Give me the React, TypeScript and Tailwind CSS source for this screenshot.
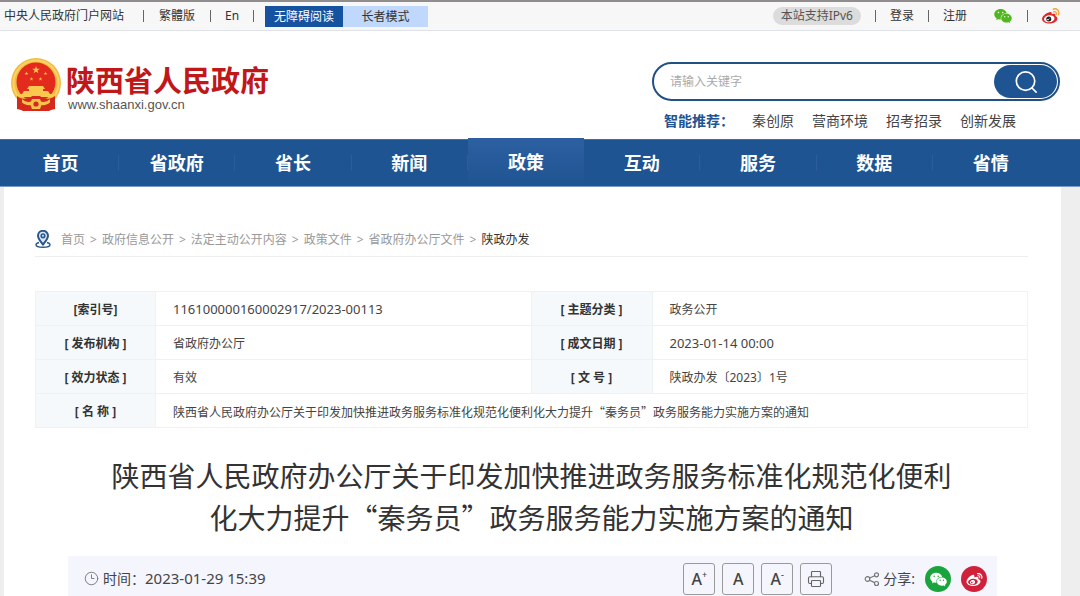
import { Fragment } from "react";
import { Clock3, Printer } from "lucide-react";
import { AiFillWechat, AiOutlineWeibo } from "react-icons/ai";

const navItems = [
  "首页",
  "省政府",
  "省长",
  "新闻",
  "政策",
  "互动",
  "服务",
  "数据",
  "省情",
];

const crumbs = [
  "首页",
  "政府信息公开",
  "法定主动公开内容",
  "政策文件",
  "省政府办公厅文件",
  "陕政办发",
];

const hotWords = ["秦创原", "营商环境", "招考招录", "创新发展"];

function Emblem() {
  const star = "M0-4 .95-1.25 3.8-1.2 1.5.5 2.35 3.2 0 1.6-2.35 3.2-1.5.5-3.8-1.2-.95-1.25Z";
  return (
    <svg viewBox="0 0 50 54" className="h-[54px] w-[50px] shrink-0" aria-hidden="true">
      <circle cx="25" cy="25" r="25" fill="#f3bb45" />
      <circle cx="25" cy="25" r="22.5" fill="none" stroke="#f9d465" strokeWidth="2" />
      <circle cx="25" cy="24" r="19.5" fill="#e42a1d" />
      <g fill="#f9c84e">
        <path d={star} transform="translate(25 12)" />
        <path d={star} transform="translate(15.5 15.5) scale(.5)" />
        <path d={star} transform="translate(34.5 15.5) scale(.5)" />
        <path d={star} transform="translate(20.5 21) scale(.5)" />
        <path d={star} transform="translate(29.5 21) scale(.5)" />
        <path d="M18 28h14l2 3h-2v2h5l2 3H11l2-3h5v-2h-2Z" />
        <path d="M6 36h38v3H6Z" />
      </g>
      <path d="M6 38c4 3 9 3.500 13 2l2-2h8l2 2c4 1.500 9 1 13-2v13l-4 1-2 1H12l-2-1-4-1Z" fill="#d6281d" />
      <path d="M11 41c3 3 7 3.500 9 2.500l1-2.500h8l1 2.500c2 1 6 .5 9-2.500v3.500c-3 2.500-6 3-8.500 2.500L29 51h-8l-1.500-4c-2.500.5-5.500 0-8.500-2.500Z" fill="#f7c24b" />
      <circle cx="25" cy="46" r="2.6" fill="#d6281d" />
    </svg>
  );
}

function WeiboColor() {
  return (
    <svg viewBox="0 0 36 32" className="h-4 w-[18px]" aria-hidden="true">
      <path
        d="M13 9c3-1.600 6-1.500 6.500 1 .2.900 0 1.600-.2 2.300 4-1.500 8-1.300 7.500 2.200-.1.700-.3 1.200 0 1.500 2.500.8 4 2.500 4 5 0 5.500-7 10-15.500 10S0 27 0 21.500C0 17 7 11 13 9Z"
        fill="#e0262b"
      />
      <ellipse cx="14.500" cy="21.500" rx="10.500" ry="7" fill="#fff" transform="rotate(-7 14.500 21.500)" />
      <circle cx="13.500" cy="22" r="5" fill="#161616" />
      <circle cx="12" cy="23" r="1.700" fill="#fff" />
      <circle cx="15.500" cy="20.500" r=".9" fill="#fff" />
      <path
        d="M22.500 2.500C29-.5 36 6 33 13.500M23.500 7.500c3.500-.8 6 1.500 5 5"
        fill="none"
        stroke="#f5a13a"
        strokeWidth="2.800"
        strokeLinecap="round"
      />
    </svg>
  );
}

function LocationPin() {
  return (
    <svg viewBox="0 0 16 18" className="h-[18px] w-4" fill="none" stroke="#2b568c" aria-hidden="true">
      <path d="M4 12.500c-2 .5-3 1.200-3 2.200 0 1.500 3 2.500 7 2.500s7-1 7-2.500c0-1-1-1.700-3-2.200" strokeWidth="1.400" />
      <path d="M8 14.500C5 11 3 8.600 3 5.800a5 5 0 0 1 10 0c0 2.800-2 5.200-5 8.700Z" strokeWidth="2" fill="#dbe8f8" />
      <circle cx="8" cy="5.800" r="1.800" strokeWidth="1.600" />
    </svg>
  );
}

function ShareNodes() {
  return (
    <svg viewBox="0 0 16 16" className="h-4 w-4" fill="none" stroke="#777" strokeWidth="1.200" aria-hidden="true">
      <circle cx="3.500" cy="8" r="2.300" />
      <circle cx="12.500" cy="3.800" r="2" />
      <circle cx="12.500" cy="12.500" r="2" />
      <path d="m5.700 7 5-2.300M5.500 9.200l5.200 2.400" />
    </svg>
  );
}

function Divider() {
  return <span className="h-3 w-px bg-[#666]" />;
}

function TopBar() {
  return (
    <div className="flex h-[31px] items-center justify-between border-t-2 border-b border-t-[#918d8f] border-b-[#dfe2e7] bg-[#f7f7f8] pr-5 pl-1 text-xs text-[#333]">
      <div className="flex items-center gap-[15px]">
        <a href="#" className="mr-1">中央人民政府门户网站</a>
        <Divider />
        <a href="#">繁體版</a>
        <Divider />
        <a href="#" className="-mx-px">En</a>
        <Divider />
        <div className="-ml-1 flex leading-[21px]">
          <button className="w-[78px] bg-[#1552a0] text-white">无障碍阅读</button>
          <button className="w-[85px] bg-[#bfd8fb]">长者模式</button>
        </div>
      </div>
      <div className="flex items-center gap-[14px]">
        <span className="rounded-full bg-[#dcdcdc] px-2 leading-[18px] text-[#555]">
          本站支持IPv6
        </span>
        <Divider />
        <a href="#">登录</a>
        <Divider />
        <a href="#">注册</a>
        <a href="#" aria-label="微信" className="ml-3">
          <AiFillWechat className="h-5 w-5 text-[#4fb81c]" />
        </a>
        <Divider />
        <a href="#" aria-label="微博">
          <WeiboColor />
        </a>
      </div>
    </div>
  );
}

function Header() {
  return (
    <header className="flex h-[108px] items-start justify-between bg-white pr-5 pl-[11px]">
      <a href="#" className="flex items-start gap-[5px] pt-[27px]">
        <Emblem />
        <span className="flex flex-col pt-[7px]">
          <span className="text-[29px] leading-8 font-bold text-[#c01719]">
            陕西省人民政府
          </span>
          <span className="pl-0.5 font-['Liberation_Sans',sans-serif] text-[13px] leading-4 text-[#555]">
            www.shaanxi.gov.cn
          </span>
        </span>
      </a>
      <div className="w-[408px] pt-[31px]">
        <form className="flex h-[39px] items-center rounded-full border-2 border-[#215084] pr-px pl-4">
          <input
            type="text"
            aria-label="请输入关键字"
            placeholder="请输入关键字"
            className="min-w-0 flex-1 bg-transparent text-xs outline-none placeholder:text-[#aaa]"
          />
          <button
            type="button"
            aria-label="搜索"
            className="flex h-[33px] w-[63px] items-center justify-center rounded-full bg-[#1f5493] text-white"
          >
            <svg viewBox="0 0 26 26" className="h-6 w-6" fill="none" stroke="currentColor" strokeWidth="1.800" strokeLinecap="round">
              <circle cx="12.500" cy="12" r="10" />
              <path d="m19.500 19.500 4.500 4.500" />
            </svg>
          </button>
        </form>
        <div className="flex gap-[18px] pt-2.5 pl-3 text-sm leading-5 text-[#444]">
          <span className="font-bold text-[#1f5492]">智能推荐：</span>
          {hotWords.map((word) => (
            <a key={word} href="#">
              {word}
            </a>
          ))}
        </div>
      </div>
    </header>
  );
}

function Nav() {
  return (
    <nav className="flex h-12 border-t border-b border-t-[#476c98] border-b-[#7c9bc4] bg-[#1f5492] pr-[31px] pl-[3px] text-lg font-bold text-white">
      {navItems.map((item) => (
        <a
          key={item}
          href="#"
          className={
            item === "政策"
              ? "-mt-0.5 flex flex-1 items-center justify-center bg-linear-to-b from-[#2c60a1] to-[#1f5492]"
              : "flex flex-1 items-center justify-center"
          }
        >
          <span className="flex-1 text-center">{item}</span>
          {item !== "政策" && item !== "省情" && (
            <span className="h-4 w-px bg-[#2a5d99]" />
          )}
        </a>
      ))}
    </nav>
  );
}

function InfoTable() {
  const label = "border border-[#edf2f5] bg-[#f5f9fc] pt-0.5 text-center font-bold text-[#333]";
  const value = "border-y border-[#edf2f5] pt-0.5 pl-[17px] text-left";
  return (
    <table className="mt-[34px] w-full table-fixed border-collapse border border-[#f0f4f6] text-xs text-[#444]">
      <colgroup>
        <col className="w-[120px]" />
        <col />
        <col className="w-[121px]" />
        <col />
      </colgroup>
      <tbody>
        <tr className="h-[34px]">
          <th scope="row" className={label}>[索引号]</th>
          <td className={`${value} text-[13px]`}>116100000160002917/2023-00113</td>
          <th scope="row" className={label}>[ 主题分类 ]</th>
          <td className={value}>政务公开</td>
        </tr>
        <tr className="h-[34px]">
          <th scope="row" className={label}>[ 发布机构 ]</th>
          <td className={value}>省政府办公厅</td>
          <th scope="row" className={label}>[ 成文日期 ]</th>
          <td className={`${value} text-[13px]`}>2023-01-14 00:00</td>
        </tr>
        <tr className="h-[34px]">
          <th scope="row" className={label}>[ 效力状态 ]</th>
          <td className={value}>有效</td>
          <th scope="row" className={label}>[ 文 号 ]</th>
          <td className={value}>陕政办发〔2023〕1号</td>
        </tr>
        <tr className="h-[34px]">
          <th scope="row" className={label}>[ 名 称 ]</th>
          <td colSpan={3} className={`${value} font-['Noto_Sans_CJK_SC',sans-serif]`}>
            陕西省人民政府办公厅关于印发加快推进政务服务标准化规范化便利化大力提升“秦务员”政务服务能力实施方案的通知
          </td>
        </tr>
      </tbody>
    </table>
  );
}

function MetaBar() {
  const tool =
    "flex h-8 w-8 items-center justify-center rounded-[3px] border border-[#999] text-base font-medium text-[#444]";
  return (
    <div className="mr-[31px] ml-[33px] flex items-center justify-between bg-[#f4f5fd] pt-[7px] pr-2.5 pb-px pl-4 text-sm text-[#444]">
      <div className="flex items-center gap-1">
        <Clock3 size={15} strokeWidth={1.5} className="text-[#777]" />
        <span>
          时间：<time className="text-[15px]">2023-01-29 15:39</time>
        </span>
      </div>
      <div className="flex items-center">
        <div className="flex gap-[7px]">
          <button className={tool} aria-label="放大字体">
            A<sup className="text-[9px]">+</sup>
          </button>
          <button className={tool} aria-label="默认字体">A</button>
          <button className={tool} aria-label="缩小字体">
            A<sup className="text-[9px]">-</sup>
          </button>
          <button className={tool} aria-label="打印">
            <Printer size={18} strokeWidth={1.5} className="text-[#666]" />
          </button>
        </div>
        <span className="ml-8 flex items-center gap-[3px]">
          <ShareNodes />
          分享:
        </span>
        <a
          href="#"
          aria-label="分享到微信"
          className="ml-2.5 flex h-[26px] w-[26px] items-center justify-center rounded-full bg-[#1aa43c] text-white"
        >
          <AiFillWechat size={19} />
        </a>
        <a
          href="#"
          aria-label="分享到微博"
          className="ml-2.5 flex h-[26px] w-[26px] items-center justify-center rounded-full bg-[#d0203a] text-white"
        >
          <AiOutlineWeibo size={19} />
        </a>
      </div>
    </div>
  );
}

export default function App() {
  return (
    <div
      lang="zh-CN"
      className="flex min-h-screen flex-col bg-[#eee] font-['Noto_Sans','Noto_Sans_CJK_SC',sans-serif]"
    >
      <TopBar />
      <Header />
      <Nav />
      <main className="mr-[19px] ml-1 flex-1 bg-white pr-[33px] pl-[31px]">
        <div className="flex h-[70px] items-end border-b border-[#eee] pb-2 text-xs text-[#999]">
          <LocationPin />
          <div className="flex gap-[5px] pl-2.5 leading-4">
            {crumbs.map((crumb, i) => (
              <Fragment key={crumb}>
                {i > 0 && <span>&gt;</span>}
                <a href="#" className={i === crumbs.length - 1 ? "text-[#333]" : ""}>
                  {crumb}
                </a>
              </Fragment>
            ))}
          </div>
        </div>
        <InfoTable />
        <h1 className="mx-auto max-w-[860px] pt-[26px] pb-[18px] text-center font-['Noto_Sans_CJK_SC',sans-serif] text-[28px] leading-[42px] text-[#333]">
          陕西省人民政府办公厅关于印发加快推进政务服务标准化规范化便利化大力提升“秦务员”政务服务能力实施方案的通知
        </h1>
        <MetaBar />
      </main>
    </div>
  );
}
